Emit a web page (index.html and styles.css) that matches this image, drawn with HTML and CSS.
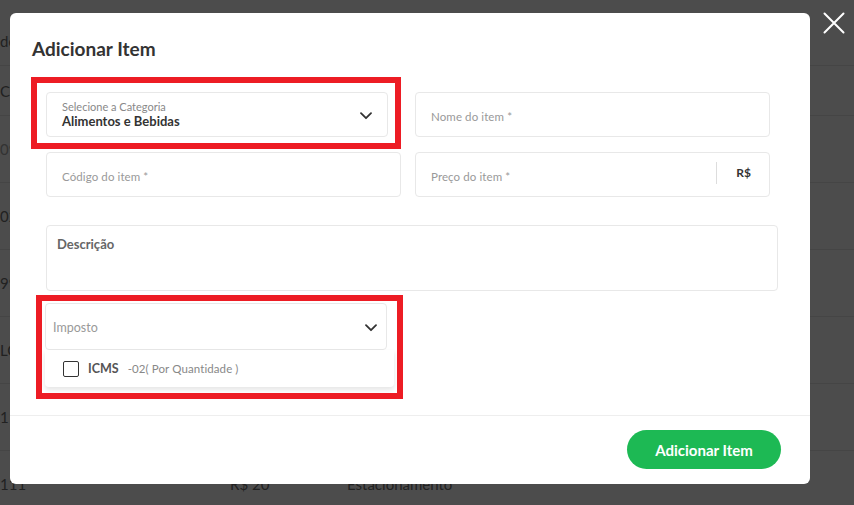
FILE: index.html
```html
<!DOCTYPE html>
<html lang="pt-BR">
<head>
  <meta charset="UTF-8" />
  <meta name="viewport" content="width=device-width, initial-scale=1.0" />
  <title>Adicionar Item</title>
  <link rel="stylesheet" href="styles.css">
</head>
<body>
  <div class="page">
    <div class="row head"><span class="c1">de</span></div>
    <div class="row short"><span class="c1">CO</span></div>
    <div class="row"><span class="c1 muted">09</span></div>
    <div class="row"><span class="c1">02</span></div>
    <div class="row"><span class="c1">99</span></div>
    <div class="row"><span class="c1">LO</span></div>
    <div class="row"><span class="c1">112</span></div>
    <div class="row"><span class="c1">111</span><span class="c2">R$ 20</span><span class="c3">Estacionamento</span></div>
  </div>

  <div class="backdrop">
    <div class="modal">
      <h2 class="modal-title">Adicionar Item</h2>

      <div class="form">
        <div class="form-row">
          <div class="field select cat-select">
            <div class="select-text">
              <span class="select-label">Selecione a Categoria</span>
              <span class="select-value">Alimentos e Bebidas</span>
            </div>
            <svg class="chevron" width="12" height="8" viewBox="0 0 12 8"><path d="M1 1.2l5 5 5-5" fill="none" stroke="#333" stroke-width="1.8" stroke-linecap="round" stroke-linejoin="round"/></svg>
          </div>
          <div class="field"><span class="placeholder">Nome do item *</span></div>
        </div>

        <div class="form-row">
          <div class="field"><span class="placeholder">Código do item *</span></div>
          <div class="field price">
            <span class="placeholder">Preço do item *</span>
            <span class="currency">R$</span>
          </div>
        </div>

        <div class="field textarea"><span class="textarea-label">Descrição</span></div>

        <div class="tax">
          <div class="field select tax-select">
            <span class="placeholder big">Imposto</span>
            <svg class="chevron" width="12" height="8" viewBox="0 0 12 8"><path d="M1 1.2l5 5 5-5" fill="none" stroke="#333" stroke-width="1.8" stroke-linecap="round" stroke-linejoin="round"/></svg>
          </div>
          <div class="dropdown">
            <label class="option">
              <span class="checkbox"></span>
              <span class="option-name">ICMS</span>
              <span class="option-desc">-02( Por Quantidade )</span>
            </label>
          </div>
        </div>
      </div>

      <div class="modal-footer">
        <button class="btn-primary">Adicionar Item</button>
      </div>

      <div class="mark mark-cat"></div>
      <div class="mark mark-tax"></div>
    </div>

    <button class="close" aria-label="Fechar">
      <svg width="22" height="22" viewBox="0 0 22 22"><path d="M1.5 1.5l19 19M20.5 1.5l-19 19" stroke="#fff" stroke-width="2" stroke-linecap="round"/></svg>
    </button>
  </div>
</body>
</html>
```

FILE: styles.css
```css
body {
  margin: 0;
  font-family: Lato, "Liberation Sans", sans-serif;
  background: #fff;
  color: #333;
  overflow: hidden;
}
.page {
  height: 505px;
  background: #fff;
}
.row {
  display: flex;
  align-items: center;
  height: 66px;
  border-bottom: 1px solid #e6e6e6;
  color: #707070;
}
.row.head {
  align-items: flex-start;
  padding-top: 32px;
  box-sizing: border-box;
}
.row.short {
  height: 49px;
}
.c1 {
  width: 230px;
  font-size: 15px;
}
.c1.muted {
  color: #aaa;
}
.c2 {
  width: 117px;
  font-size: 15px;
}
.c3 {
  font-size: 15px;
}

/* modal */
.backdrop {
  position: fixed;
  inset: 0;
  background: rgba(0, 0, 0, 0.7);
}
.modal {
  position: absolute;
  left: 10px;
  top: 13px;
  width: 800px;
  background: #fff;
  border-radius: 6px;
}
.modal-title {
  margin: 0;
  padding: 24px 22px 0;
  font-size: 19px;
  line-height: 24px;
  font-weight: 700;
  color: #333;
}
.form {
  padding: 31px 0 28px 36px;
}
.form-row {
  display: grid;
  grid-template-columns: 355px 355px;
  column-gap: 14px;
  margin-bottom: 15px;
}
.field {
  display: flex;
  align-items: center;
  box-sizing: border-box;
  height: 45px;
  padding: 0 15px;
  border: 1px solid #e8e8e8;
  border-radius: 4px;
  background: #fff;
}
.placeholder {
  margin-top: 4px;
  font-size: 11.5px;
  letter-spacing: 0.1px;
  color: #999;
}
.placeholder.big {
  margin-top: 1px;
  font-size: 12.5px;
  letter-spacing: 0;
}
.select {
  justify-content: space-between;
}
.cat-select {
  width: 342px;
}
.select-text {
  display: flex;
  flex-direction: column;
}
.select-label {
  font-size: 11px;
  line-height: 13px;
  color: #888;
}
.select-value {
  font-size: 13px;
  line-height: 16px;
  font-weight: 700;
  color: #333;
}
.chevron {
  margin-top: 2px;
}
.price {
  justify-content: space-between;
  padding-right: 18px;
}
.currency {
  display: flex;
  align-items: center;
  height: 22px;
  padding-left: 19px;
  margin-top: -4px;
  border-left: 1px solid #ddd;
  font-size: 12px;
  font-weight: 700;
  color: #333;
}
.textarea {
  align-items: flex-start;
  width: 732px;
  height: 66px;
  margin-top: 28px;
  padding: 10px;
}
.textarea-label {
  font-size: 13px;
  line-height: 16px;
  font-weight: 700;
  color: #666;
}
.tax {
  width: 348px;
  margin-top: 12px;
}
.tax-select {
  width: 342px;
  height: 47px;
  padding: 0 9px 0 7px;
  margin-left: -1px;
}
.dropdown {
  height: 37px;
  margin-left: -1px;
  background: #fff;
  border-radius: 0 0 4px 4px;
  box-shadow: 0 3px 5px rgba(0, 0, 0, 0.1);
}
.option {
  display: flex;
  align-items: center;
  height: 37px;
  padding-left: 18px;
}
.checkbox {
  width: 16px;
  height: 16px;
  box-sizing: border-box;
  border: 1.5px solid #333;
  border-radius: 2px;
  margin-right: 9px;
}
.option-name {
  font-size: 12.5px;
  font-weight: 700;
  color: #555;
  margin-right: 9px;
}
.option-desc {
  font-size: 11.5px;
  letter-spacing: 0.1px;
  color: #888;
}
.modal-footer {
  display: flex;
  justify-content: flex-end;
  padding: 14px 29px 15px;
  border-top: 1px solid #eee;
}
.btn-primary {
  width: 154px;
  height: 39px;
  border: none;
  border-radius: 20px;
  background: #1db954;
  color: #fff;
  font-family: Lato, "Liberation Sans", sans-serif;
  font-size: 15px;
  font-weight: 700;
  cursor: pointer;
}
.mark {
  position: absolute;
  border: 6px solid #ed1c24;
  box-sizing: border-box;
  pointer-events: none;
}
.mark-cat {
  left: 21px;
  top: 64px;
  width: 370px;
  height: 72px;
}
.mark-tax {
  left: 26px;
  top: 282px;
  width: 367px;
  height: 104px;
}
.close {
  position: absolute;
  left: 823px;
  top: 12px;
  padding: 0;
  border: none;
  background: none;
  cursor: pointer;
}
```
